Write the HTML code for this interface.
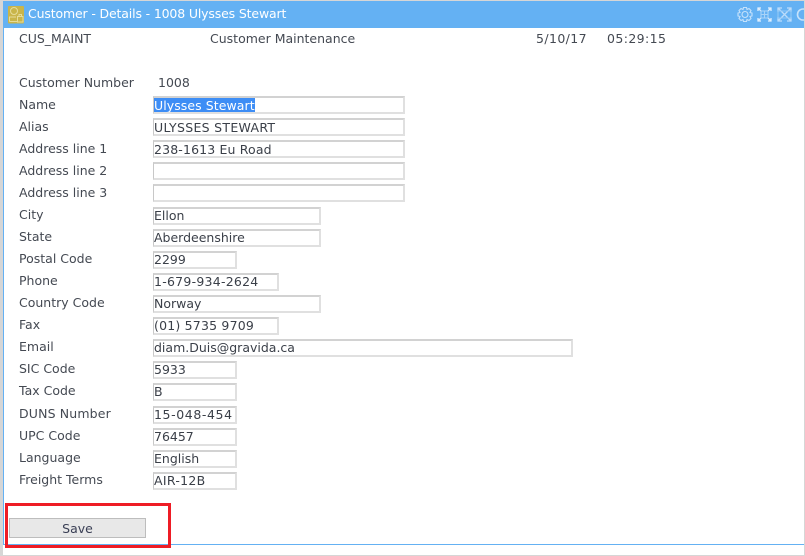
<!DOCTYPE html>
<html><head><meta charset="utf-8"><style>
html,body{margin:0;padding:0;background:#fff}
body{width:805px;height:556px;position:relative;overflow:hidden;font-family:"DejaVu Sans","Liberation Sans",sans-serif;font-size:12.5px;color:#444952}
.a{position:absolute;white-space:nowrap;line-height:16px}
.i{position:absolute;left:153px;height:18px;box-sizing:border-box;border:2px solid #e0e0e0;border-top-color:#d2d2d2;border-left:1px solid #c8c8c8;background:#fff;line-height:15px;white-space:nowrap;color:#3a3f48;overflow:hidden}
.l{line-height:13px}
</style></head><body>
<div style="position:absolute;left:3px;top:1px;width:801px;height:27px;background:#64b1f3"></div>
<div style="position:absolute;left:0;top:0;width:805px;height:1px;background:#d6d6d6"></div>
<div style="position:absolute;left:0;top:0;width:3px;height:556px;background:#d6d6d6"></div>
<div style="position:absolute;left:3px;top:28px;width:1px;height:517px;background:#64b1f3"></div>
<div style="position:absolute;left:804px;top:0;width:1px;height:556px;background:#d6d6d6"></div>
<div style="position:absolute;left:3px;top:544px;width:801px;height:1px;background:#64b1f3"></div>
<div style="position:absolute;left:0;top:555px;width:805px;height:1px;background:#d6d6d6"></div>
<svg style="position:absolute;left:8px;top:6px" width="16" height="18" viewBox="0 0 16 18"><rect width="16" height="17.500" rx="1" fill="#c9b54a"/><g fill="none" stroke="#e6dc9a" stroke-width="1"><circle cx="6" cy="5" r="3.500"/><path d="M1.500 15.500V11h6.500M9.500 10.500h5.500v5.500H9.500zM11 10.500V8.500h2.500v2M1.500 15.500H9.500"/></g></svg>
<div class="a" style="left:28px;top:6px;color:#fff;letter-spacing:-.15px">Customer - Details - 1008 Ulysses Stewart</div>
<svg style="position:absolute;left:737px;top:6px" width="67" height="17" viewBox="0 0 67 17"><g fill="none" stroke="#c6e2fb" stroke-width="1.100"><circle cx="8" cy="8.500" r="3"/><path d="M6.500 1.500h3l.5 2 2-1 2 2-1 2 2 .5v3l-2 .5 1 2-2 2-2-1-.5 2h-3l-.5-2-2 1-2-2 1-2-2-.5v-3l2-.5-1-2 2-2 2 1z"/><path d="M21 2l3 3M34 2l-3 3M21 15l3-3M34 15l-3-3M21 5V2h3M34 5V2h-3M21 12v3h3M34 12v3h-3" stroke="#e0effd" stroke-width="1.300"/><path d="M24 5h7v7h-7zM27.500 5v7M24 8.500h7" stroke="#a8d3f8"/><path d="M41 2l13 13M54 2L41 15M41 6V2h4M54 6V2h-4M41 11v4h4M54 11v4h-4" stroke="#bcdcfa" stroke-width="1.300"/><path d="M41 5h13v7H41z" stroke="#92c8f6"/><circle cx="66" cy="8.500" r="5.500" stroke-width="1.600"/></g></svg>
<div class="a" style="left:19px;top:31px">CUS_MAINT</div>
<div class="a" style="left:210px;top:31px">Customer Maintenance</div>
<div class="a" style="left:536px;top:31px;letter-spacing:.4px">5/10/17</div>
<div class="a" style="left:607px;top:31px;letter-spacing:.4px">05:29:15</div>
<div class="a" style="left:19px;top:75px">Customer Number</div>
<div class="a" style="left:158px;top:75px">1008</div>

<div class="a" style="left:19px;top:97px">Name</div>
<div class="i" style="top:96px;width:252px"><span style="background:#3d8df5;color:#fff;letter-spacing:.07px">Ulysses Stewart</span></div>
<div class="a" style="left:19px;top:119px">Alias</div>
<div class="i" style="top:118px;width:252px;letter-spacing:.3px">ULYSSES STEWART</div>
<div class="a" style="left:19px;top:141px">Address line 1</div>
<div class="i" style="top:140px;width:252px;letter-spacing:.15px">238-1613 Eu Road</div>
<div class="a" style="left:19px;top:163px">Address line 2</div>
<div class="i" style="top:162px;width:252px"></div>
<div class="a" style="left:19px;top:185px">Address line 3</div>
<div class="i" style="top:184px;width:252px"></div>
<div class="a" style="left:19px;top:207px">City</div>
<div class="i l" style="top:207px;width:168px">Ellon</div>
<div class="a" style="left:19px;top:229px">State</div>
<div class="i l" style="top:229px;width:168px">Aberdeenshire</div>
<div class="a" style="left:19px;top:251px">Postal Code</div>
<div class="i l" style="top:251px;width:84px">2299</div>
<div class="a" style="left:19px;top:273px">Phone</div>
<div class="i l" style="top:273px;width:126px;letter-spacing:.25px">1-679-934-2624</div>
<div class="a" style="left:19px;top:295px">Country Code</div>
<div class="i l" style="top:295px;width:168px">Norway</div>
<div class="a" style="left:19px;top:317px">Fax</div>
<div class="i l" style="top:317px;width:126px;letter-spacing:.2px">(01) 5735 9709</div>
<div class="a" style="left:19px;top:339px">Email</div>
<div class="i l" style="top:339px;width:420px">diam.Duis@gravida.ca</div>
<div class="a" style="left:19px;top:361px">SIC Code</div>
<div class="i l" style="top:361px;width:84px">5933</div>
<div class="a" style="left:19px;top:383px">Tax Code</div>
<div class="i l" style="top:383px;width:84px">B</div>
<div class="a" style="left:19px;top:406px;letter-spacing:.15px">DUNS Number</div>
<div class="i l" style="top:406px;width:84px;letter-spacing:.6px">15-048-454</div>
<div class="a" style="left:19px;top:428px">UPC Code</div>
<div class="i l" style="top:428px;width:84px">76457</div>
<div class="a" style="left:19px;top:450px">Language</div>
<div class="i l" style="top:450px;width:84px">English</div>
<div class="a" style="left:19px;top:472px">Freight Terms</div>
<div class="i l" style="top:472px;width:84px;letter-spacing:.3px">AIR-12B</div>

<div style="position:absolute;left:9px;top:518px;width:137px;height:20px;box-sizing:border-box;border:1px solid #bdbdbd;background:#e8e8e8;text-align:center;line-height:20px;color:#3a3f55">Save</div>
<div style="position:absolute;left:5px;top:503px;width:166px;height:45px;box-sizing:border-box;border:3px solid #ee1c25"></div>
</body></html>
